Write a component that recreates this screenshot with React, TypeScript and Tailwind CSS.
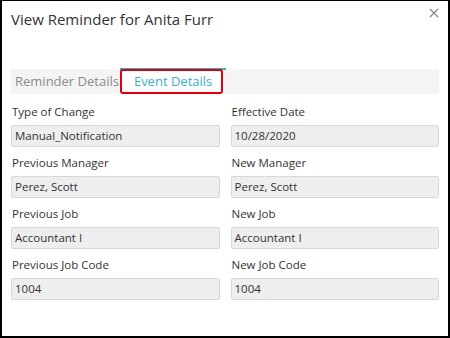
export default function App() {
  const rows = [
    ['Type of Change', 'Manual_Notification', 'Effective Date', '10/28/2020'],
    ['Previous Manager', 'Perez, Scott', 'New Manager', 'Perez, Scott'],
    ['Previous Job', 'Accountant I', 'New Job', 'Accountant I'],
    ['Previous Job Code', '1004', 'New Job Code', '1004'],
  ];

  return (
    <div
      className="w-[450px] h-[338px] bg-white border-t border-x-2 border-b-2 border-black text-[#333]"
      style={{ fontFamily: '"Open Sans", sans-serif' }}
    >
      <div className="flex items-start justify-between pl-[9px] pr-[8px] pt-[5px]">
        <h1 className="text-[15px] leading-[26px]">View Reminder for Anita Furr</h1>
        <button className="text-[#888] mt-[1px]">
          <svg width="12" height="12" viewBox="0 0 12 12">
            <path d="M2 2 L10 10 M10 2 L2 10" stroke="#8a8a8a" strokeWidth="1.3" />
          </svg>
        </button>
      </div>

      <div className="mx-[9px] mt-[37px] flex h-[25px] bg-[#f4f4f4]">
        <div className="flex items-center pl-[4px] pr-[1px] text-[13px] text-[#8c8c8c]">Reminder Details</div>
        <div className="relative flex items-center pl-[14px] pr-[11px] text-[13px] text-[#3aafc7] bg-white">
          <div className="absolute left-0 right-[-3px] top-[-1px] h-[2px] bg-[#2fb3c6]" />
          <div className="absolute inset-0 rounded-[3px] border-2 border-[#e0000f]" />
          Event Details
        </div>
      </div>

      <div className="px-[9px] pt-[9px] flex flex-col gap-[7px]">
        {rows.map((r) => (
          <div key={r[0]} className="grid grid-cols-2 gap-x-[11px]">
            <div>
              <div className="text-[11.5px] leading-[18px] pl-[1px]">{r[0]}</div>
              <div className="mt-[4px] h-[22px] rounded-[2px] border border-[#d8d8d8] bg-[#eeeeee] px-[3px] text-[11.5px] leading-[20px]">
                {r[1]}
              </div>
            </div>
            <div>
              <div className="text-[11.5px] leading-[18px] pl-[1px]">{r[2]}</div>
              <div className="mt-[4px] h-[22px] rounded-[2px] border border-[#d8d8d8] bg-[#eeeeee] px-[3px] text-[11.5px] leading-[20px]">
                {r[3]}
              </div>
            </div>
          </div>
        ))}
      </div>
    </div>
  );
}
